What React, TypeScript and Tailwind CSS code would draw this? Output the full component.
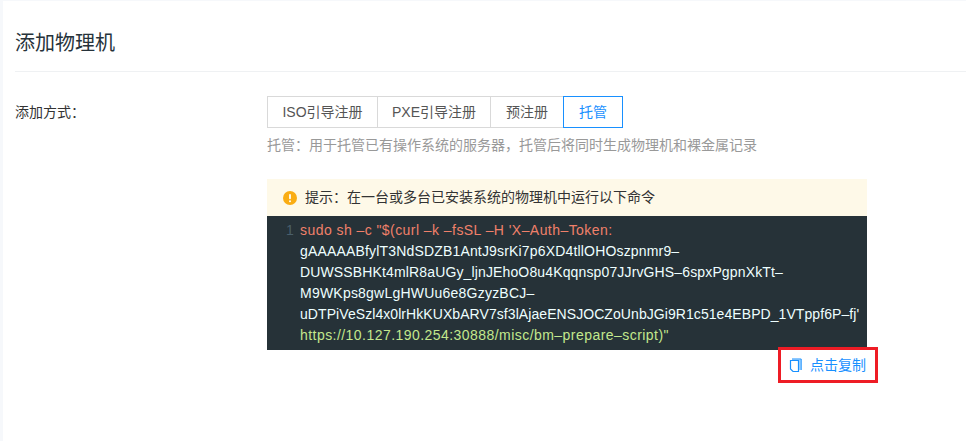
import React, { useState } from 'react';

const sans = 'font-["Liberation_Sans","Noto_Sans_CJK_SC",sans-serif]';

const modes = [
  { label: 'ISO引导注册', width: 'w-[111px]' },
  { label: 'PXE引导注册', width: 'w-[114px]' },
  { label: '预注册', width: 'w-[74px]' },
  { label: '托管', width: 'w-[60px]' },
];

export default function App() {
  const [mode, setMode] = useState('托管');

  return (
    <div className={`${sans} relative h-[441px] w-[966px] overflow-hidden border-l-[3px] border-t border-[#f6f8fb] bg-white pl-3`}>
      <div className="flex h-[71px] items-end border-b border-[#eff1f3] pb-[16px]">
        <h1 className="text-[20px] leading-6 font-normal text-[#26323a]">添加物理机</h1>
      </div>

      <div className="flex pt-[24px]">
        <div className="w-[252px] pt-[6px] text-[14px] leading-5 text-[#333]">添加方式：</div>
        <div className="w-[600px]">
          <div className="flex h-8">
            {modes.map((m) => (
              <button
                key={m.label}
                onClick={() => setMode(m.label)}
                className={`-ml-px h-8 border text-[14px] first:ml-0 ${m.width} ${
                  mode === m.label ? 'z-10 border-[#1890ff] text-[#1890ff]' : 'border-[#d9d9d9] text-[#555]'
                }`}
              >
                {m.label}
              </button>
            ))}
          </div>
          <p className="mt-[7px] text-[14px] leading-5 text-[#999]">
            托管：用于托管已有操作系统的服务器，托管后将同时生成物理机和裸金属记录
          </p>

          <div className="mt-[24px] flex h-[37px] items-center bg-[#fef9e8] pl-4 text-[14px] text-[#333]">
            <svg width="14" height="14" viewBox="0 0 14 14" className="mr-2">
              <circle cx="7" cy="7" r="7" fill="#faad14" />
              <rect x="6.1" y="3" width="1.8" height="5.2" rx="0.9" fill="#fff" />
              <circle cx="7" cy="10.2" r="1" fill="#fff" />
            </svg>
            提示：在一台或多台已安装系统的物理机中运行以下命令
          </div>

          <div className="flex h-[134px] bg-[#263238] pt-1 text-[14px] leading-[21px]">
            <div className="w-[33px] pl-[19px] text-[#4a5f6b]">1</div>
            <div className="whitespace-nowrap text-[#eeffff]">
              <div className="tracking-[0.44px] text-[#f0806a]">sudo sh –c "$(curl –k –fsSL –H 'X–Auth–Token:</div>
              <div className="tracking-[0.17px]">gAAAAABfylT3NdSDZB1AntJ9srKi7p6XD4tllOHOszpnmr9–</div>
              <div className="tracking-[0.14px]">DUWSSBHKt4mlR8aUGy_ljnJEhoO8u4Kqqnsp07JJrvGHS–6spxPgpnXkTt–</div>
              <div className="tracking-[0.22px]">M9WKps8gwLgHWUu6e8GzyzBCJ–</div>
              <div className="tracking-[0.07px]">uDTPiVeSzl4x0lrHkKUXbARV7sf3lAjaeENSJOCZoUnbJGi9R1c51e4EBPD_1VTppf6P–fj'</div>
              <div className="tracking-[0.45px] text-[#c3e88d]">https://10.127.190.254:30888/misc/bm–prepare–script)"</div>
            </div>
          </div>
        </div>
      </div>

      {/* red annotation around the copy action */}
      <button className="absolute left-[775px] top-[346px] flex h-9 w-[100px] items-center border-[3px] border-[#ee1c25] pl-[8px] text-[14px] text-[#1890ff]">
        <svg width="13" height="15" viewBox="0 0 13 15" fill="none" className="mr-2">
          <path d="M3 1.5h9v10.5H9.5V2.8H3z" fill="#a5d5ff" />
          <path d="M1.5 2.5h8v11H4l-2.5-2.5z" fill="#fff" stroke="#1890ff" strokeWidth="1.2" />
          <path d="M3 1h9.2v11" stroke="#1890ff" strokeWidth="1" />
        </svg>
        点击复制
      </button>
    </div>
  );
}
